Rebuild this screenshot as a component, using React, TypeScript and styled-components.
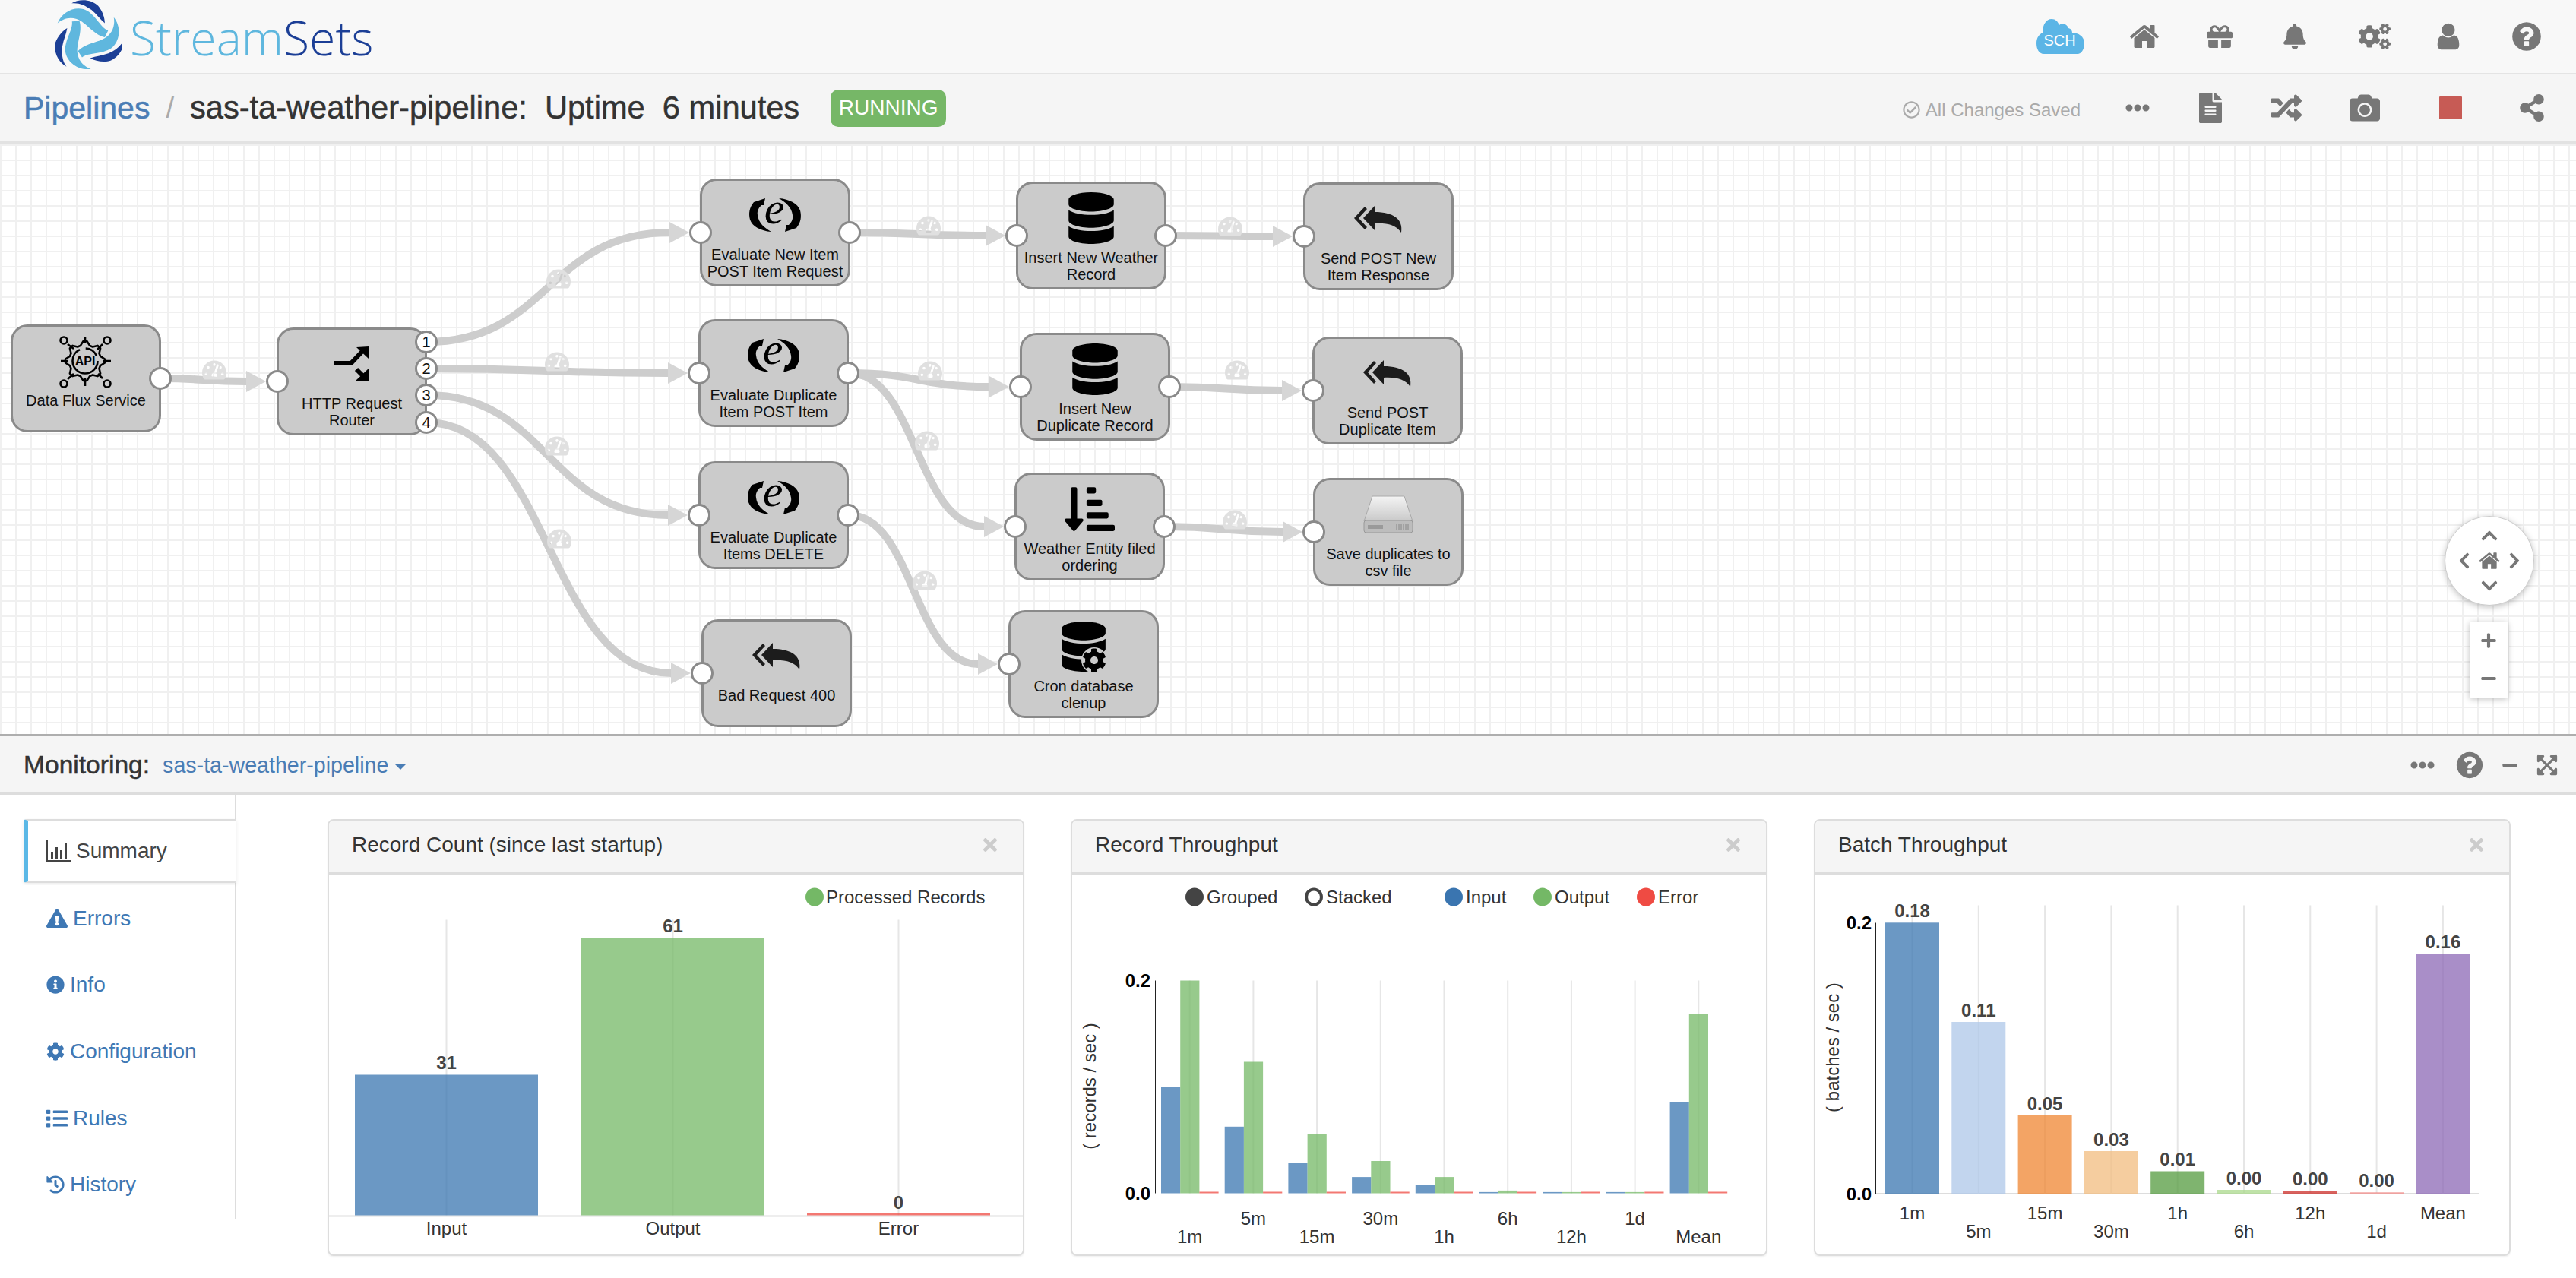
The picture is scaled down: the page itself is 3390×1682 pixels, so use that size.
import React from 'react';
import styled, { createGlobalStyle } from 'styled-components';
import {
  FaBell,
  FaCamera,
  FaChevronDown,
  FaChevronLeft,
  FaChevronRight,
  FaChevronUp,
  FaCog,
  FaCogs,
  FaDatabase,
  FaEllipsisH,
  FaExclamationTriangle,
  FaExpandArrowsAlt,
  FaFileAlt,
  FaGift,
  FaHistory,
  FaInfoCircle,
  FaList,
  FaMinus,
  FaPlus,
  FaRandom,
  FaRegCheckCircle,
  FaShareAlt,
  FaSortAmountDownAlt,
  FaTachometerAlt,
  FaTimes,
} from 'react-icons/fa';

const GlobalStyle = createGlobalStyle`
  html, body {
    margin: 0;
    padding: 0;
    background: #fff;
    overflow: hidden;
  }
  * {
    box-sizing: border-box;
  }
  body {
    font-family: "Liberation Sans", Arial, sans-serif;
    color: #333;
  }
`;

const Page = styled.div`
  width: 3390px;
  height: 1682px;
  display: flex;
  flex-direction: column;
  overflow: hidden;
`;

/* top navbar */

const TopBar = styled.header`
  height: 98px;
  flex: none;
  display: flex;
  align-items: center;
  justify-content: space-between;
  padding: 0 15px 0 70px;
  background: #f8f8f8;
  border-bottom: 2px solid #e4e4e4;
`;

const Brand = styled.div`
  display: flex;
  align-items: center;
  gap: 11px;
`;

const BrandText = styled.span`
  font-family: "Open Sans", sans-serif;
  font-weight: 300;
  font-size: 62.5px;
  color: #5fb7de;
`;

const BrandDark = styled.span`
  color: #1c3f96;
`;

const IconRow = styled.div`
  display: flex;
  align-items: center;
`;

const IconSlot = styled.div<{ $w: number; $color?: string }>`
  width: ${(p) => p.$w}px;
  display: flex;
  align-items: center;
  justify-content: center;
  color: ${(p) => p.$color || '#777'};
`;

const StopSquare = styled.div`
  width: 30px;
  height: 30px;
  background: #c75b55;
  border-radius: 1px;
`;

/* breadcrumb toolbar */

const Toolbar = styled.div`
  height: 92px;
  flex: none;
  display: flex;
  align-items: center;
  justify-content: space-between;
  padding: 0 8px 0 31px;
  background: #f5f5f5;
  border-bottom: 4px solid #e2e2e2;
`;

const Crumbs = styled.div`
  display: flex;
  align-items: center;
  font-size: 41.6px;
  -webkit-text-stroke: 0.5px currentColor;
`;

const CrumbLink = styled.span`
  color: #4a7db5;
  font-size: 41px;
`;

const CrumbSlash = styled.span`
  color: #aaa;
  margin: 0 21px;
  font-size: 38px;
  -webkit-text-stroke: 0;
`;

const CrumbTitle = styled.span`
  color: #333;
  white-space: pre;
`;

const RunningBadge = styled.span`
  margin-left: 41px;
  width: 152px;
  height: 49px;
  display: flex;
  align-items: center;
  justify-content: center;
  background: #76b767;
  color: #fff;
  border-radius: 10px;
  font-size: 28px;
  -webkit-text-stroke: 0;
`;

const SavedNote = styled.div`
  display: flex;
  align-items: center;
  gap: 7px;
  margin: 5px 32px 0 0;
  color: #aaa;
  font-size: 24px;
`;

/* pipeline canvas */

const CANVAS_TOP = 190;

const Canvas = styled.section`
  position: relative;
  height: 776px;
  flex: none;
  background-color: #fff;
  background-image:
    linear-gradient(#f0f0f0 2px, transparent 2px),
    linear-gradient(90deg, #f0f0f0 2px, transparent 2px);
  background-size: 20px 20px;
  overflow: hidden;
`;

const EdgeLayer = styled.svg`
  position: absolute;
  left: 0;
  top: 0;
`;

const Node = styled.div<{ $x: number; $y: number }>`
  position: absolute;
  left: ${(p) => p.$x}px;
  top: ${(p) => p.$y - CANVAS_TOP}px;
  width: 198px;
  height: 142px;
  display: flex;
  flex-direction: column;
  align-items: center;
  background: #cbcbcb;
  border: 3px solid #8a8a8a;
  border-radius: 22px;
`;

const NodeIcon = styled.div`
  position: relative;
  flex: none;
  height: 72px;
  margin-top: 9px;
  width: 100%;
  display: flex;
  align-items: center;
  justify-content: center;
  color: #000;
`;

const NodeLabel = styled.div`
  margin-top: 5px;
  width: 190px;
  font-size: 20px;
  line-height: 22px;
  text-align: center;
  color: #111;
`;

const Port = styled.div<{ $side: 'in' | 'out'; $dy?: number }>`
  position: absolute;
  ${(p) => (p.$side === 'in' ? 'left: -17px;' : 'right: -17px;')}
  top: ${(p) => (p.$dy ?? 68) - 15}px;
  width: 30px;
  height: 30px;
  border-radius: 50%;
  display: flex;
  align-items: center;
  justify-content: center;
  background: #fff;
  border: 3px solid #8a8a8a;
  font-size: 20px;
  color: #111;
`;

const Gauge = styled.div<{ $x: number; $y: number }>`
  position: absolute;
  left: ${(p) => p.$x - 16}px;
  top: ${(p) => p.$y - CANVAS_TOP - 16}px;
  color: #e0e0e0;
  line-height: 0;
`;

const CogBadge = styled.span`
  position: absolute;
  left: 93px;
  top: 37px;
  padding: 1px;
  line-height: 0;
  border-radius: 50%;
  background: #cbcbcb;
`;

const PanControl = styled.div`
  position: absolute;
  left: 3217px;
  top: ${679 - CANVAS_TOP}px;
  width: 118px;
  height: 118px;
  display: grid;
  grid-template-columns: repeat(3, 1fr);
  grid-template-rows: repeat(3, 1fr);
  place-items: center;
  padding: 9px;
  background: #fff;
  border-radius: 50%;
  border: 1px solid #ccc;
  box-shadow: 0 2px 8px rgba(0, 0, 0, 0.25);
  color: #777;
`;

const ZoomControl = styled.div`
  position: absolute;
  left: 3250px;
  top: ${818 - CANVAS_TOP}px;
  width: 50px;
  height: 100px;
  display: flex;
  flex-direction: column;
  background: #fff;
  box-shadow: 0 2px 8px rgba(0, 0, 0, 0.25);
  color: #777;
`;

const ZoomButton = styled.div`
  flex: 1;
  display: flex;
  align-items: center;
  justify-content: center;
`;

/* monitoring area */

const MonitorBar = styled.div`
  height: 80px;
  flex: none;
  display: flex;
  align-items: center;
  justify-content: space-between;
  padding: 2px 11px 0 31px;
  background: #f5f5f5;
  border-top: 3px solid #aeaeae;
  border-bottom: 3px solid #ddd;
`;

const MonitorTitle = styled.div`
  display: flex;
  align-items: center;
`;

const MonitorLabel = styled.span`
  font-size: 33.6px;
  color: #333;
  -webkit-text-stroke: 0.5px #333;
  margin-right: 17px;
`;

const MonitorLink = styled.span`
  font-size: 28.6px;
  color: #4a7db5;
`;

const Caret = styled.span`
  width: 0;
  height: 0;
  margin-left: 8px;
  margin-top: 4px;
  border-left: 8px solid transparent;
  border-right: 8px solid transparent;
  border-top: 8px solid #4a7db5;
`;

const MonitorBody = styled.div`
  flex: 1;
  display: flex;
  align-items: flex-start;
`;

const SideNav = styled.nav`
  width: 311px;
  height: 559px;
  flex: none;
  padding: 32px 0 0 31px;
  border-right: 2px solid #ddd;
`;

const NavItem = styled.div<{ $active?: boolean }>`
  width: ${(p) => (p.$active ? 280 : 278)}px;
  height: ${(p) => (p.$active ? 84 : 87.6)}px;
  display: flex;
  align-items: center;
  gap: 7px;
  padding-left: 30px;
  font-size: 28px;
  color: ${(p) => (p.$active ? '#444' : '#3f78b4')};
  background: #fff;
  margin-bottom: ${(p) => (p.$active ? 3 : 0)}px;
  ${(p) =>
    p.$active &&
    `
    padding-left: 24px;
    border-left: 6px solid #5bb8e6;
    border-top: 2px solid #ddd;
    border-bottom: 2px solid #ddd;
    border-radius: 4px 0 0 4px;
    box-shadow: 0 2px 5px rgba(0, 0, 0, 0.08);
  `}
`;

const PanelGrid = styled.div`
  display: grid;
  grid-template-columns: repeat(3, 917px);
  column-gap: 61px;
  padding: 32px 0 0 120px;
`;

const Panel = styled.article`
  height: 575px;
  display: flex;
  flex-direction: column;
  background: #fff;
  border: 2px solid #ddd;
  border-radius: 8px;
  box-shadow: 0 2px 2px rgba(0, 0, 0, 0.05);
  overflow: hidden;
`;

const PanelHead = styled.div`
  height: 71px;
  flex: none;
  display: flex;
  align-items: center;
  justify-content: space-between;
  padding: 0 30px 4px;
  background: #f5f5f5;
  border-bottom: 3px solid #ddd;
  font-size: 28px;
  color: #333;
`;

const CloseIcon = styled.span`
  display: flex;
  color: #ccc;
`;

const ChartSvg = styled.svg`
  display: block;
  flex: 1;
`;

const ChartText = styled.text<{ $size?: number; $bold?: boolean; $color?: string; $anchor?: string }>`
  font-family: "Liberation Sans", Arial, sans-serif;
  font-size: ${(p) => p.$size ?? 24}px;
  font-weight: ${(p) => (p.$bold ? 700 : 400)};
  fill: ${(p) => p.$color ?? '#333'};
  text-anchor: ${(p) => p.$anchor ?? 'middle'};
  dominant-baseline: central;
`;

/* icons */

const FaFourHome = ({ size }: { size: number }) => (
  <svg width={size} height={size} viewBox="0 0 1792 1792" fill="currentColor">
    <path d="M1472 992v480q0 26-19 45t-45 19h-384v-384h-256v384h-384q-26 0-45-19t-19-45v-480q0-1 .5-3t.5-3l575-474 575 474q1 2 1 6zm223-69l-62 74q-8 9-21 11h-3q-13 0-21-7l-692-577-692 577q-12 8-24 7-13-2-21-11l-62-74q-8-10-7-23.5t11-21.5l719-599q32-26 76-26t76 26l244 204v-195q0-14 9-23t23-9h192q14 0 23 9t9 23v408l219 182q10 8 11 21.5t-7 23.5z" />
  </svg>
);

const FaFourUser = ({ size }: { size: number }) => (
  <svg width={size} height={size} viewBox="0 0 1792 1792" fill="currentColor">
    <path d="M1536 1399q0 109-62.5 187t-150.5 78h-854q-88 0-150.5-78t-62.5-187q0-85 8.5-160.5t31.5-152 58.5-131 94-89 134.5-34.5q131 128 313 128t313-128q76 0 134.5 34.5t94 89 58.5 131 31.5 152 8.5 160.5zm-256-887q0 159-112.5 271.5t-271.5 112.5-271.5-112.5-112.5-271.5 112.5-271.5 271.5-112.5 271.5 112.5 112.5 271.5z" />
  </svg>
);

const FaFourQuestion = ({ size }: { size: number }) => (
  <svg width={size} height={size} viewBox="0 0 1792 1792" fill="currentColor">
    <path d="M1024 1376v-192q0-14-9-23t-23-9h-192q-14 0-23 9t-9 23v192q0 14 9 23t23 9h192q14 0 23-9t9-23zm256-672q0-88-55.5-163t-138.5-116-170-41q-243 0-371 213-15 24 8 42l132 100q7 6 19 6 16 0 25-12 53-68 86-92 34-24 86-24 48 0 85.5 26t37.5 59q0 38-20 61t-68 45q-63 28-115.5 86.5t-52.5 125.5v36q0 14 9 23t23 9h192q14 0 23-9t9-23q0-19 21.5-49.5t54.5-49.5q32-18 49-28.5t46-35 44.5-48 28-60.5 12.5-81zm384 192q0 209-103 385.5t-279.5 279.5-385.5 103-385.5-103-279.5-279.5-103-385.5 103-385.5 279.5-279.5 385.5-103 385.5 103 279.5 279.5 103 385.5z" />
  </svg>
);

const BarChartIcon = () => (
  <svg width="32" height="28" viewBox="0 0 32 28" fill="currentColor">
    <path d="M0 0H2V26H32V28H0Z" />
    <rect x="6" y="15" width="3" height="9" />
    <rect x="12" y="9" width="3" height="15" />
    <rect x="18" y="13" width="3" height="11" />
    <rect x="24" y="3" width="3" height="21" />
  </svg>
);

const ReplyAllIcon = () => (
  <svg width="66" height="36" viewBox="0 0 66 36" fill="#1c1c1c">
    <path d="M15 2L1 17L15 32L18 29L7 17L18 5Z" />
    <path d="M28 1L13 17L28 33V24C44 23 56 26 63 36C66 18 52 9 28 9Z" />
  </svg>
);

const LogoMark = () => (
  <svg width="90" height="96" viewBox="14 3 82 88">
    {[0, 120, 240].map((angle) => (
      <g key={angle} transform={`rotate(${angle} 55 47)`}>
        <path
          fill="#5fb7de"
          d="M19 31C24 18 38 11 50 14C64 18 70 36 80 40L76 48C62 45 54 30 42 26C33 23 25 26 19 31Z"
        />
        <path fill="#1c3f96" d="M36 7C45 1 60 2 68 10C73 16 76 24 76 31C70 26 66 20 60 15C52 9 44 6 36 7Z" />
      </g>
    ))}
  </svg>
);

const SchCloud = () => (
  <svg width="64" height="48" viewBox="0 0 64 48">
    <path
      fill="#5bb5e6"
      d="M10 47C3 47 0 40 0 33C0 25 4 21 8 19C8 8 13 1 20 1C25 1 28 4 30 9C33 6 40 7 42 13C46 14 47 17 47 19C55 19 63 24 63 33C63 41 59 47 54 47Z"
    />
    <text x="30.5" y="36" fill="#fff" fontSize="20" textAnchor="middle" fontFamily="Liberation Sans, sans-serif">
      SCH
    </text>
  </svg>
);

const ApiGearIcon = () => {
  const teeth = 8;
  const cx = 42;
  const cy = 43;
  const pts: string[] = [];
  for (let i = 0; i < teeth * 4; i++) {
    const a = ((i - 0.5) / (teeth * 4)) * Math.PI * 2;
    const r = i % 4 === 0 || i % 4 === 1 ? 26 : 21;
    pts.push(`${(cx + r * Math.sin(a)).toFixed(1)},${(cy - r * Math.cos(a)).toFixed(1)}`);
  }
  return (
    <svg width="70" height="70" viewBox="8 8 70 70" fill="none" stroke="#000" strokeWidth="2.6">
      <polygon points={pts.join(' ')} strokeLinejoin="round" />
      <circle cx={cx} cy={cy} r="16.5" strokeDasharray="70 8 18 8" />
      <path d="M42 12V20M42 66V76M10 43H19M65 43H76M19 21L27 27M65 21L58 28M19 67L27 60M65 66L59 60" />
      <circle cx="14" cy="16" r="4.5" />
      <circle cx="71" cy="16" r="4.5" />
      <circle cx="14" cy="73" r="4.5" />
      <circle cx="71" cy="73" r="4.5" />
      <text
        x={cx}
        y={cy + 6}
        fill="#000"
        stroke="none"
        fontSize="16"
        fontWeight="700"
        textAnchor="middle"
        fontFamily="Liberation Sans, sans-serif"
      >
        API
      </text>
    </svg>
  );
};

const RouterIcon = () => (
  <svg width="50" height="50" viewBox="18 10 50 50">
    <path d="M20 34H42L60 15" fill="none" stroke="#000" strokeWidth="6" />
    <path d="M49 42L60 53" fill="none" stroke="#000" strokeWidth="6" />
    <polygon points="49,13 65,12 65,28" fill="#000" />
    <polygon points="48,57 65,57 65,41" fill="#000" />
  </svg>
);

const ExpressionIcon = () => (
  <svg width="70" height="100" viewBox="14 -14 70 100">
    <text
      x="48"
      y="47"
      fontFamily="Liberation Serif, serif"
      fontStyle="italic"
      fontSize="60"
      textAnchor="middle"
      fill="#000"
    >
      e
    </text>
    {[0, 180].map((angle) => (
      <path
        key={angle}
        transform={`rotate(${angle} 49 36)`}
        fill="#000"
        d="M36 14L21 19C15 26 14 34 16 42C19 51 30 57 44 58C35 53 27 46 26 36C25 30 28 26 31 23L34 23Z"
      />
    ))}
  </svg>
);

const DiskIcon = () => (
  <svg width="66" height="50" viewBox="0 0 66 50">
    <defs>
      <linearGradient id="diskTop" x1="0" y1="0" x2="0" y2="1">
        <stop offset="0" stopColor="#f4f4f4" />
        <stop offset="1" stopColor="#c9c9c9" />
      </linearGradient>
    </defs>
    <path d="M12 1H54L65 34H1Z" fill="url(#diskTop)" stroke="#aaa" />
    <rect x="1" y="33" width="64" height="16" rx="3" fill="#bdbdbd" stroke="#999" />
    <rect x="6" y="39" width="20" height="5" fill="#9a9a9a" />
    <path d="M44 38V46M47 38V46M50 38V46M53 38V46M56 38V46M59 38V46" stroke="#888" />
  </svg>
);

/* pipeline data */

const replyIcon = <ReplyAllIcon />;
const evalIcon = <ExpressionIcon />;

type PipelineNode = {
  id: string;
  x: number;
  y: number;
  lines: string[];
  icon: React.ReactNode;
  input?: boolean;
  output?: boolean;
  lanes?: number[];
};

const nodes: PipelineNode[] = [
  { id: 'flux', x: 14, y: 427, lines: ['Data Flux Service'], icon: <ApiGearIcon />, output: true },
  {
    id: 'router',
    x: 364,
    y: 431,
    lines: ['HTTP Request', 'Router'],
    icon: <RouterIcon />,
    input: true,
    lanes: [19, 54, 89, 125],
  },
  { id: 'evalNew', x: 921, y: 235, lines: ['Evaluate New Item', 'POST Item Request'], icon: evalIcon, input: true, output: true },
  {
    id: 'insertNew',
    x: 1337,
    y: 239,
    lines: ['Insert New Weather', 'Record'],
    icon: <FaDatabase size={68} />,
    input: true,
    output: true,
  },
  { id: 'sendNew', x: 1715, y: 240, lines: ['Send POST New', 'Item Response'], icon: replyIcon, input: true },
  { id: 'evalDup', x: 919, y: 420, lines: ['Evaluate Duplicate', 'Item POST Item'], icon: evalIcon, input: true, output: true },
  {
    id: 'insertDup',
    x: 1342,
    y: 438,
    lines: ['Insert New', 'Duplicate Record'],
    icon: <FaDatabase size={68} />,
    input: true,
    output: true,
  },
  { id: 'sendDup', x: 1727, y: 443, lines: ['Send POST', 'Duplicate Item'], icon: replyIcon, input: true },
  { id: 'evalDel', x: 919, y: 607, lines: ['Evaluate Duplicate', 'Items DELETE'], icon: evalIcon, input: true, output: true },
  {
    id: 'ordering',
    x: 1335,
    y: 622,
    lines: ['Weather Entity filed', 'ordering'],
    icon: <FaSortAmountDownAlt size={66} />,
    input: true,
    output: true,
  },
  { id: 'save', x: 1728, y: 629, lines: ['Save duplicates to', 'csv file'], icon: <DiskIcon />, input: true },
  { id: 'bad', x: 923, y: 815, lines: ['Bad Request 400'], icon: replyIcon, input: true },
  {
    id: 'cron',
    x: 1327,
    y: 803,
    lines: ['Cron database', 'clenup'],
    icon: (
      <>
        <FaDatabase size={66} />
        <CogBadge>
          <FaCog size={32} />
        </CogBadge>
      </>
    ),
    input: true,
  },
];

const edges: { from: string; lane?: number; to: string }[] = [
  { from: 'flux', to: 'router' },
  { from: 'router', lane: 0, to: 'evalNew' },
  { from: 'router', lane: 1, to: 'evalDup' },
  { from: 'router', lane: 2, to: 'evalDel' },
  { from: 'router', lane: 3, to: 'bad' },
  { from: 'evalNew', to: 'insertNew' },
  { from: 'insertNew', to: 'sendNew' },
  { from: 'evalDup', to: 'insertDup' },
  { from: 'evalDup', to: 'ordering' },
  { from: 'insertDup', to: 'sendDup' },
  { from: 'ordering', to: 'save' },
  { from: 'evalDel', to: 'cron' },
];

const gauges = [
  [282, 487],
  [735, 367],
  [733, 476],
  [733, 587],
  [736, 709],
  [1222, 297],
  [1619, 298],
  [1224, 488],
  [1220, 580],
  [1628, 487],
  [1625, 684],
  [1217, 764],
];

const nodeById = (id: string) => nodes.find((n) => n.id === id) as PipelineNode;

const Pipeline = () => (
  <Canvas>
    <EdgeLayer width="3390" height="776" viewBox={`0 ${CANVAS_TOP} 3390 776`}>
      {edges.map((e) => {
        const a = nodeById(e.from);
        const b = nodeById(e.to);
        const ax = a.x + 198;
        const ay = a.y + (e.lane !== undefined && a.lanes ? a.lanes[e.lane] : 71);
        const tipX = b.x - 14;
        const baseX = tipX - 26;
        const by = b.y + 71;
        const mid = (baseX - ax) / 2;
        return (
          <g key={`${e.from}-${e.to}`}>
            <path
              d={`M${ax} ${ay}C${ax + mid} ${ay} ${baseX - mid} ${by} ${baseX} ${by}`}
              fill="none"
              stroke="#cdcdcd"
              strokeWidth="10"
            />
            <polygon points={`${baseX},${by - 14} ${tipX},${by} ${baseX},${by + 14}`} fill="#d6d6d6" />
          </g>
        );
      })}
    </EdgeLayer>
    {gauges.map(([x, y]) => (
      <Gauge key={`${x}-${y}`} $x={x} $y={y}>
        <FaTachometerAlt size={32} />
      </Gauge>
    ))}
    {nodes.map((n) => (
      <Node key={n.id} $x={n.x} $y={n.y}>
        <NodeIcon>{n.icon}</NodeIcon>
        <NodeLabel>
          {n.lines.map((line) => (
            <div key={line}>{line}</div>
          ))}
        </NodeLabel>
        {n.input && <Port $side="in" />}
        {n.output && <Port $side="out" />}
        {n.lanes?.map((dy, i) => (
          <Port key={dy} $side="out" $dy={dy - 3}>
            {i + 1}
          </Port>
        ))}
      </Node>
    ))}
    <PanControl>
      <span />
      <FaChevronUp size={24} />
      <span />
      <FaChevronLeft size={24} />
      <FaFourHome size={30} />
      <FaChevronRight size={24} />
      <span />
      <FaChevronDown size={24} />
      <span />
    </PanControl>
    <ZoomControl>
      <ZoomButton>
        <FaPlus size={22} />
      </ZoomButton>
      <ZoomButton>
        <FaMinus size={22} />
      </ZoomButton>
    </ZoomControl>
  </Canvas>
);

/* charts, drawn in page coordinates so the numbers read straight off the layout */

const BLUE = '#3a75b0';
const GREEN = '#74b866';
const RED = '#ef4b43';
const DARK = '#444';

const RecordCountChart = () => {
  const bars = [
    { label: 'Input', value: '31', x: 467, top: 1415, color: BLUE, valueY: 1399 },
    { label: 'Output', value: '61', x: 765, top: 1235, color: GREEN, valueY: 1219 },
    { label: 'Error', value: '0', x: 1062, top: 1597, color: RED, valueY: 1583 },
  ];
  return (
    <ChartSvg viewBox="433 1152 913 499" width="913" height="499">
      <circle cx="1072" cy="1181" r="12" fill={GREEN} />
      <ChartText x="1087" y="1181" $anchor="start">
        Processed Records
      </ChartText>
      <line x1="433" x2="1346" y1="1601" y2="1601" stroke="#ddd" strokeWidth="2" />
      {bars.map((b) => (
        <g key={b.label}>
          <line x1={b.x + 120.5} x2={b.x + 120.5} y1="1211" y2="1601" stroke="#e6e6e6" strokeWidth="2" />
          <rect x={b.x} y={b.top} width="241" height={1600 - b.top} fill={b.color} opacity="0.75" />
          <ChartText x={b.x + 120.5} y={b.valueY} $bold $color={DARK}>
            {b.value}
          </ChartText>
          <ChartText x={b.x + 120.5} y="1617">
            {b.label}
          </ChartText>
        </g>
      ))}
    </ChartSvg>
  );
};

const RecordThroughputChart = () => {
  const groups = [
    { label: '1m', input: 140, output: 280, row: 1 },
    { label: '5m', input: 87.7, output: 173, row: 0 },
    { label: '15m', input: 39.7, output: 77.8, row: 1 },
    { label: '30m', input: 21.4, output: 42.5, row: 0 },
    { label: '1h', input: 10.7, output: 21.4, row: 1 },
    { label: '6h', input: 1.6, output: 3.6, row: 0 },
    { label: '12h', input: 1.6, output: 1.6, row: 1 },
    { label: '1d', input: 1.6, output: 1.6, row: 0 },
    { label: 'Mean', input: 119.8, output: 236, row: 1 },
  ];
  const base = 1571;
  const legend = [
    { label: 'Input', cx: 1914, color: BLUE },
    { label: 'Output', cx: 2031, color: GREEN },
    { label: 'Error', cx: 2167, color: RED },
  ];
  return (
    <ChartSvg viewBox="1412 1152 913 499" width="913" height="499">
      <circle cx="1573" cy="1181" r="12" fill={DARK} />
      <ChartText x="1589" y="1181" $anchor="start">
        Grouped
      </ChartText>
      <circle cx="1730" cy="1181" r="10" fill="#fff" stroke={DARK} strokeWidth="4" />
      <ChartText x="1746" y="1181" $anchor="start">
        Stacked
      </ChartText>
      {legend.map((l) => (
        <g key={l.label}>
          <circle cx={l.cx} cy="1181" r="12" fill={l.color} />
          <ChartText x={l.cx + 16} y="1181" $anchor="start">
            {l.label}
          </ChartText>
        </g>
      ))}
      {groups.map((g, i) => {
        const x = 1529 + i * 83.7;
        const cx = x + 37.7;
        return (
          <g key={g.label}>
            <line x1={cx} x2={cx} y1="1291" y2={base} stroke="#e6e6e6" strokeWidth="2" />
            <rect x={x} y={base - g.input} width="25.2" height={g.input} fill={BLUE} opacity="0.75" />
            <rect x={x + 25.2} y={base - g.output} width="25.2" height={g.output} fill={GREEN} opacity="0.75" />
            <rect x={x + 50.4} y={base - 2} width="25.2" height="2" fill={RED} opacity="0.75" />
            <ChartText x={cx} y={g.row ? 1628 : 1604}>
              {g.label}
            </ChartText>
          </g>
        );
      })}
      <line x1="1521.5" x2="1521.5" y1="1291" y2={base} stroke="#222" strokeWidth="1" />
      <ChartText x="1515" y="1291" $bold $color="#000" $anchor="end">
        0.2
      </ChartText>
      <ChartText x="1515" y={base} $bold $color="#000" $anchor="end">
        0.0
      </ChartText>
      <ChartText x="1434" y="1430" transform="rotate(-90 1434 1430)">
        ( records / sec )
      </ChartText>
    </ChartSvg>
  );
};

const BatchThroughputChart = () => {
  const bars = [
    { label: '1m', value: '0.18', height: 356.7, color: BLUE, row: 0 },
    { label: '5m', value: '0.11', height: 226, color: '#aec7e8', row: 1 },
    { label: '15m', value: '0.05', height: 103, color: '#ef8531', row: 0 },
    { label: '30m', value: '0.03', height: 56, color: '#f1bc7f', row: 1 },
    { label: '1h', value: '0.01', height: 29.5, color: '#549b3f', row: 0 },
    { label: '6h', value: '0.00', height: 5, color: '#aad88b', row: 1 },
    { label: '12h', value: '0.00', height: 3.2, color: '#cc2e28', row: 0 },
    { label: '1d', value: '0.00', height: 1.8, color: '#f18d8b', row: 1 },
    { label: 'Mean', value: '0.16', height: 316, color: '#8c68b6', row: 0 },
  ];
  const base = 1571.5;
  return (
    <ChartSvg viewBox="2390 1152 913 499" width="913" height="499">
      <line x1="2470" x2="3263" y1={base} y2={base} stroke="#ddd" strokeWidth="2" />
      {bars.map((b, i) => {
        const x = 2482 + i * 87.3;
        const cx = x + 35.5;
        return (
          <g key={b.label}>
            <line x1={cx} x2={cx} y1="1192" y2={base} stroke="#e6e6e6" strokeWidth="2" />
            <rect x={x} y={base - b.height} width="71" height={b.height} fill={b.color} opacity="0.75" />
            <ChartText x={cx} y={base - b.height - 16} $bold $color={DARK}>
              {b.value}
            </ChartText>
            <ChartText x={cx} y={b.row ? 1621 : 1597}>
              {b.label}
            </ChartText>
          </g>
        );
      })}
      <line x1="2469.5" x2="2469.5" y1="1215" y2={base} stroke="#222" strokeWidth="1" />
      <ChartText x="2464" y="1215" $bold $color="#000" $anchor="end">
        0.2
      </ChartText>
      <ChartText x="2464" y={base} $bold $color="#000" $anchor="end">
        0.0
      </ChartText>
      <ChartText x="2412" y="1379" transform="rotate(-90 2412 1379)">
        ( batches / sec )
      </ChartText>
    </ChartSvg>
  );
};

const panels = [
  { title: 'Record Count (since last startup)', chart: <RecordCountChart /> },
  { title: 'Record Throughput', chart: <RecordThroughputChart /> },
  { title: 'Batch Throughput', chart: <BatchThroughputChart /> },
];

const navItems = [
  { label: 'Summary', icon: <BarChartIcon />, active: true },
  { label: 'Errors', icon: <FaExclamationTriangle size={28} /> },
  { label: 'Info', icon: <FaInfoCircle size={24} /> },
  { label: 'Configuration', icon: <FaCog size={24} /> },
  { label: 'Rules', icon: <FaList size={28} /> },
  { label: 'History', icon: <FaHistory size={24} /> },
];

export default function App() {
  return (
    <Page>
      <GlobalStyle />
      <TopBar>
        <Brand>
          <LogoMark />
          <BrandText>
            Stream<BrandDark>Sets</BrandDark>
          </BrandText>
        </Brand>
        <IconRow>
          <IconSlot $w={98}>
            <SchCloud />
          </IconSlot>
          <IconSlot $w={122}>
            <FaFourHome size={42} />
          </IconSlot>
          <IconSlot $w={76}>
            <FaGift size={34} />
          </IconSlot>
          <IconSlot $w={122}>
            <FaBell size={34} />
          </IconSlot>
          <IconSlot $w={88}>
            <FaCogs size={42} />
          </IconSlot>
          <IconSlot $w={106}>
            <FaFourUser size={40} />
          </IconSlot>
          <IconSlot $w={100}>
            <FaFourQuestion size={44} />
          </IconSlot>
        </IconRow>
      </TopBar>

      <Toolbar>
        <Crumbs>
          <CrumbLink>Pipelines</CrumbLink>
          <CrumbSlash>/</CrumbSlash>
          <CrumbTitle>sas-ta-weather-pipeline:  Uptime  6 minutes</CrumbTitle>
          <RunningBadge>RUNNING</RunningBadge>
        </Crumbs>
        <IconRow>
          <SavedNote>
            <FaRegCheckCircle size={23} />
            All Changes Saved
          </SavedNote>
          <IconSlot $w={86}>
            <FaEllipsisH size={32} />
          </IconSlot>
          <IconSlot $w={106}>
            <FaFileAlt size={40} />
          </IconSlot>
          <IconSlot $w={94}>
            <FaRandom size={40} />
          </IconSlot>
          <IconSlot $w={112}>
            <FaCamera size={40} />
          </IconSlot>
          <IconSlot $w={114}>
            <StopSquare />
          </IconSlot>
          <IconSlot $w={100}>
            <FaShareAlt size={36} />
          </IconSlot>
        </IconRow>
      </Toolbar>

      <Pipeline />

      <MonitorBar>
        <MonitorTitle>
          <MonitorLabel>Monitoring:</MonitorLabel>
          <MonitorLink>sas-ta-weather-pipeline</MonitorLink>
          <Caret />
        </MonitorTitle>
        <IconRow>
          <IconSlot $w={62}>
            <FaEllipsisH size={32} />
          </IconSlot>
          <IconSlot $w={62}>
            <FaFourQuestion size={40} />
          </IconSlot>
          <IconSlot $w={44}>
            <FaMinus size={22} />
          </IconSlot>
          <IconSlot $w={54}>
            <FaExpandArrowsAlt size={30} />
          </IconSlot>
        </IconRow>
      </MonitorBar>

      <MonitorBody>
        <SideNav>
          {navItems.map((item) => (
            <NavItem key={item.label} $active={item.active}>
              {item.icon}
              {item.label}
            </NavItem>
          ))}
        </SideNav>
        <PanelGrid>
          {panels.map((panel) => (
            <Panel key={panel.title}>
              <PanelHead>
                {panel.title}
                <CloseIcon>
                  <FaTimes size={26} />
                </CloseIcon>
              </PanelHead>
              {panel.chart}
            </Panel>
          ))}
        </PanelGrid>
      </MonitorBody>
    </Page>
  );
}
